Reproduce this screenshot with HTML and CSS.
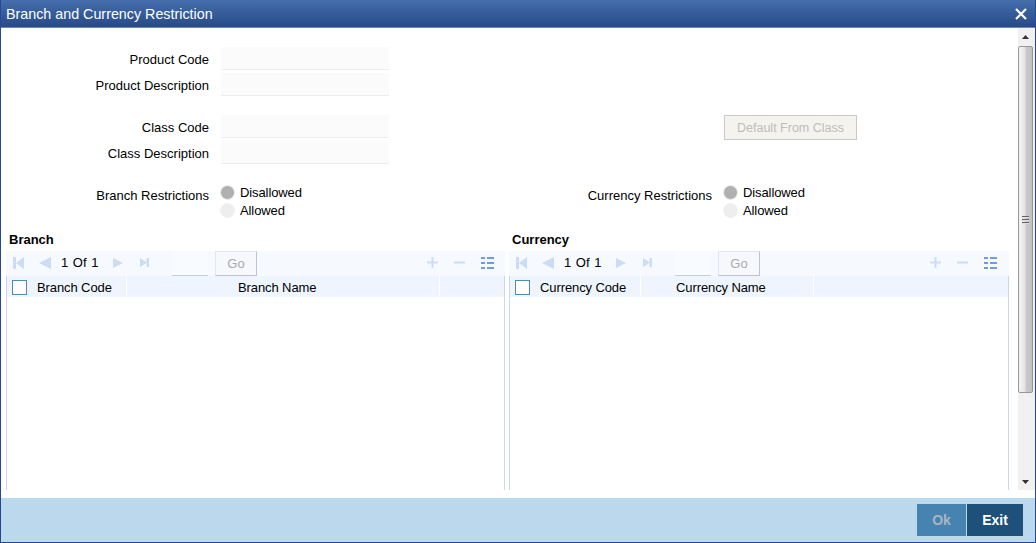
FILE: index.html
```html
<!DOCTYPE html>
<html lang="en">
<head>
  <meta charset="UTF-8" />
  <meta name="viewport" content="width=device-width, initial-scale=1.0"/>
  <title>Branch and Currency Restriction</title>
  <link rel="stylesheet" href="styles.css">
</head>
<body>

<div class="window">
  <div class="titlebar">
    <h1>Branch and Currency Restriction</h1>
    <svg class="close" width="12" height="12" viewBox="0 0 12 12"><path d="M1 1L11 11M11 1L1 11"/></svg>
  </div>

  <div class="main">
    <div class="content">
      <!-- left side -->
      <div class="column">
        <div class="fields">
          <div class="field"><label for="prodCode">Product Code</label><input type="text" id="prodCode" disabled></div>
          <div class="field"><label for="prodDesc">Product Description</label><input type="text" id="prodDesc" disabled></div>
        </div>
        <div class="fields">
          <div class="field"><label for="classCode">Class Code</label><input type="text" id="classCode" disabled></div>
          <div class="field"><label for="classDesc">Class Description</label><input type="text" id="classDesc" disabled></div>
        </div>
        <div class="restriction">
          <span class="label">Branch Restrictions</span>
          <div class="options">
            <div class="option"><span class="radio on"></span>Disallowed</div>
            <div class="option"><span class="radio"></span>Allowed</div>
          </div>
        </div>

        <h2>Branch</h2>
        <div class="toolbar">
          <div class="pager">
            <svg class="first" width="11" height="12" viewBox="0 0 11 12"><path d="M0 0h3v12H0zM11 0v12L3 6z"/></svg>
            <svg class="prev" width="12" height="12" viewBox="0 0 12 12"><path d="M12 0v12L0 6z"/></svg>
            <span class="pages">1 Of 1</span>
            <svg class="next" width="10" height="10" viewBox="0 0 10 10"><path d="M0 0v10L10 5z"/></svg>
            <svg class="last" width="9" height="9" viewBox="0 0 9 9"><path d="M0 0v9L7 4.500zM6.500 0H9v9H6.500z"/></svg>
            <input type="text" class="page" disabled>
            <button class="go" disabled>Go</button>
          </div>
          <div class="tools">
            <svg width="11" height="11" viewBox="0 0 11 11"><path d="M4.500 0h2v4.500H11v2H6.500V11h-2V6.500H0v-2h4.500z"/></svg>
            <svg width="11" height="11" viewBox="0 0 11 11"><path d="M0 4.500h11v2H0z"/></svg>
            <svg class="list" width="13" height="12" viewBox="0 0 13 12"><path d="M0 0h4v2H0zM6 0h7v2H6zM0 5h4v2H0zM6 5h7v2H6zM0 10h4v2H0zM6 10h7v2H6z"/></svg>
          </div>
        </div>
        <div class="table">
          <div class="thead">
            <div class="th code"><span class="check"></span>Branch Code</div>
            <div class="th name-branch">Branch Name</div>
          </div>
        </div>
      </div>

      <!-- right side -->
      <div class="column right">
        <div class="class-default"><button disabled>Default From Class</button></div>
        <div class="restriction">
          <span class="label">Currency Restrictions</span>
          <div class="options">
            <div class="option"><span class="radio on"></span>Disallowed</div>
            <div class="option"><span class="radio"></span>Allowed</div>
          </div>
        </div>

        <h2>Currency</h2>
        <div class="toolbar">
          <div class="pager">
            <svg class="first" width="11" height="12" viewBox="0 0 11 12"><path d="M0 0h3v12H0zM11 0v12L3 6z"/></svg>
            <svg class="prev" width="12" height="12" viewBox="0 0 12 12"><path d="M12 0v12L0 6z"/></svg>
            <span class="pages">1 Of 1</span>
            <svg class="next" width="10" height="10" viewBox="0 0 10 10"><path d="M0 0v10L10 5z"/></svg>
            <svg class="last" width="9" height="9" viewBox="0 0 9 9"><path d="M0 0v9L7 4.500zM6.500 0H9v9H6.500z"/></svg>
            <input type="text" class="page" disabled>
            <button class="go" disabled>Go</button>
          </div>
          <div class="tools">
            <svg width="11" height="11" viewBox="0 0 11 11"><path d="M4.500 0h2v4.500H11v2H6.500V11h-2V6.500H0v-2h4.500z"/></svg>
            <svg width="11" height="11" viewBox="0 0 11 11"><path d="M0 4.500h11v2H0z"/></svg>
            <svg class="list" width="13" height="12" viewBox="0 0 13 12"><path d="M0 0h4v2H0zM6 0h7v2H6zM0 5h4v2H0zM6 5h7v2H6zM0 10h4v2H0zM6 10h7v2H6z"/></svg>
          </div>
        </div>
        <div class="table">
          <div class="thead">
            <div class="th code wide"><span class="check"></span>Currency Code</div>
            <div class="th name-currency">Currency Name</div>
          </div>
        </div>
      </div>
    </div>

    <div class="scrollbar">
      <svg class="arrow" width="7" height="4" viewBox="0 0 7 4"><path d="M0 4L3.500 0L7 4z"/></svg>
      <div class="thumb"><span></span><span></span><span></span></div>
      <svg class="arrow" width="7" height="4" viewBox="0 0 7 4"><path d="M0 0h7L3.500 4z"/></svg>
    </div>
  </div>

  <div class="footer">
    <button class="ok" disabled>Ok</button>
    <button class="exit">Exit</button>
  </div>
</div>

</body>
</html>
```
FILE: styles.css
```css
* {
  box-sizing: border-box;
}
body {
  margin: 0;
  font-family: "Liberation Sans", Arial, sans-serif;
  font-size: 13px;
  color: #000;
}
input, button {
  font-family: inherit;
  font-size: 13px;
  margin: 0;
  padding: 0;
  border: 0;
}
svg {
  display: block;
  flex: none;
}
.window {
  height: 543px;
  display: flex;
  flex-direction: column;
  border: 1px solid #264796;
  border-top: 0;
  background: #fff;
}

/* title */
.titlebar {
  height: 28px;
  flex: none;
  display: flex;
  align-items: center;
  justify-content: space-between;
  padding: 0 8px 0 5px;
  background: linear-gradient(#456fac, #274a88);
  border-bottom: 1px solid #7386a8;
}
h1 {
  margin: 0;
  font-size: 14.300px;
  font-weight: normal;
  color: #fff;
}
.close {
  fill: none;
  stroke: #fff;
  stroke-width: 2.200;
}

.main {
  height: 470px;
  flex: none;
  display: flex;
  justify-content: space-between;
  padding-bottom: 8px;
}
.content {
  display: flex;
  gap: 4px;
  padding-left: 5px;
}
.column {
  width: 499px;
  display: flex;
  flex-direction: column;
  padding-top: 19px;
}
.column.right {
  width: 500px;
}

/* form */
.fields {
  display: flex;
  flex-direction: column;
  gap: 3px;
  margin-bottom: 19px;
}
.field {
  height: 23px;
  display: flex;
  align-items: center;
}
.field label, .restriction .label {
  width: 203px;
  margin-right: 12px;
  text-align: right;
}
.field label {
  padding-top: 2px;
}
.field input {
  width: 168px;
  height: 23px;
  background: #fbfbfb;
  border-bottom: 1px solid #ededed;
}
.restriction {
  display: flex;
  height: 49px;
}
.restriction .label {
  line-height: 26px;
  margin-right: 11px;
}
.option {
  height: 18px;
  display: flex;
  align-items: center;
  letter-spacing: -0.1px;
}
.radio {
  width: 15px;
  height: 15px;
  margin-right: 5px;
  border: 1px solid #f1f1f1;
  border-radius: 50%;
  background: #eee;
}
.radio.on {
  background: #b0b0b0;
}
.class-default {
  height: 136px;
  padding: 68px 0 0 215px;
}
.class-default button {
  width: 133px;
  height: 25px;
  background: #f4f3ee;
  border: 1px solid #c9c9c7;
  color: #bdbdbd;
  font-size: 12.500px;
}

h2 {
  margin: 0;
  height: 19px;
  padding-left: 3px;
  font-size: 13px;
  line-height: 15px;
}

/* grid toolbar */
.toolbar {
  height: 25px;
  flex: none;
  display: flex;
  align-items: center;
  justify-content: space-between;
  padding: 0 11px 0 7px;
  background: #f6faff;
}
.right .toolbar {
  padding-right: 12px;
}
.pager {
  display: flex;
  align-items: center;
  height: 25px;
}
.toolbar svg {
  fill: #cbdcf4;
  margin-bottom: 2px;
}
.pager .first {
  margin-right: 15px;
}
.pages {
  width: 38px;
  margin: 0 14px 2px 10px;
  word-spacing: 1px;
  white-space: nowrap;
}
.next {
  margin-right: 17px;
}
.page {
  width: 36px;
  height: 24px;
  margin: 0 7px 0 23px;
  background: #f8fbff;
  border-bottom: 1px solid #c9cdd8;
}
.go {
  width: 42px;
  height: 25px;
  background: #f6f8fc;
  border: 1px solid #e3e6ee;
  border-right-color: #bfc3cf;
  border-bottom-color: #bfc3cf;
  color: #a9a9ad;
}
.tools {
  display: flex;
  align-items: center;
  gap: 16px;
}
.toolbar .list {
  fill: #6f9ddb;
}

/* grid */
.table {
  flex: 1;
  border: 1px solid #ccd7e5;
  border-width: 0 1px;
}
.thead {
  height: 21px;
  display: flex;
  background: #eff5fe;
}
.th {
  display: flex;
  align-items: center;
  border-right: 1px solid #fff;
  padding-top: 1px;
  letter-spacing: -0.1px;
}
.code {
  width: 120px;
  padding-left: 5px;
}
.code.wide {
  width: 131px;
}
.name-branch {
  width: 313px;
  padding-left: 111px;
}
.name-currency {
  width: 173px;
  padding-left: 35px;
}
.check {
  width: 15px;
  height: 15px;
  margin-right: 10px;
  background: #fff;
  border: 1px solid #4b8cb5;
}

/* scrollbar */
.scrollbar {
  width: 17px;
  display: flex;
  flex-direction: column;
  align-items: center;
  justify-content: space-between;
  padding: 7px 2px 6px 0;
  background: #f1f1f1;
}
.thumb {
  width: 15px;
  height: 347px;
  margin: 7px 0 auto;
  display: flex;
  flex-direction: column;
  align-items: center;
  justify-content: center;
  gap: 1px;
  border: 1px solid #979797;
  border-radius: 2px;
  background: linear-gradient(to right, #f5f5f5, #e4e4e4 45%, #c9c9c9 55%, #c2c2c2);
}
.thumb span {
  width: 7px;
  height: 2px;
  background: #666;
  border-bottom: 1px solid #ddd;
}
.arrow {
  fill: #333;
}

.footer {
  flex: 1;
  display: flex;
  justify-content: flex-end;
  gap: 1px;
  padding: 6px 12px 0 0;
  background: #bcd8ec;
}
.footer button {
  height: 32px;
  font-weight: bold;
  font-size: 14px;
}
.ok {
  width: 49px;
  background: #4783b0;
  color: #a7b6c1;
}
.exit {
  width: 56px;
  background: #1e5179;
  color: #fff;
}
```
